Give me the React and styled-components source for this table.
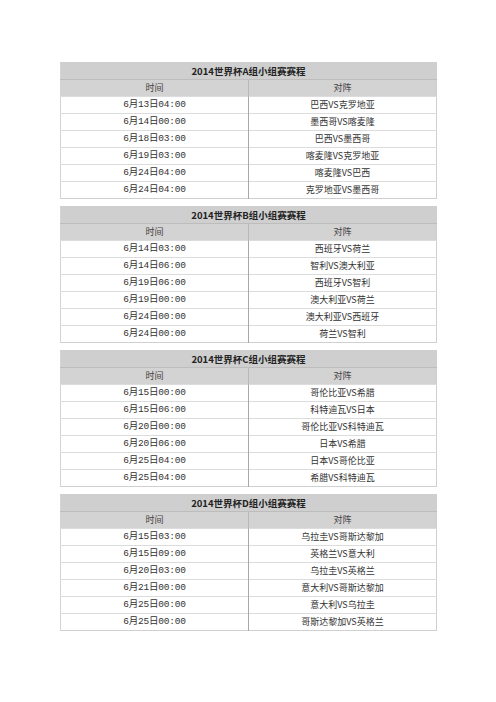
import React from 'react';
import styled, { createGlobalStyle } from 'styled-components';

const GlobalStyle = createGlobalStyle`
    body {
        margin: 0;
        background: #fff;
        font-family: "Noto Sans CJK SC", "DejaVu Sans", sans-serif;
    }
`;

const Page = styled.div`
    width: 496px;
    height: 702px;
    padding: 62px 0 0 60px;
    box-sizing: border-box;
    display: flex;
    flex-direction: column;
    gap: 7px;
`;

const Table = styled.table`
    width: 377px;
    border-collapse: collapse;
    table-layout: fixed;
    font-size: 9px;
    color: #333;
    border-left: 1px solid #d4d4d4;
    border-right: 1px solid #cfcfcf;
    border-bottom: 1px solid #d0d0d0;
`;

const Title = styled.th`
    height: 17px;
    padding: 0;
    background: #cfcfcf;
    font-weight: bold;
    font-size: 9.5px;
    color: #222;
    text-align: center;
    border-bottom: 1px solid #bdbdbd;
    line-height: 16px;
`;

const Head = styled.td`
    height: 16px;
    padding: 0;
    background: #d3d3d3;
    text-align: center;
    line-height: 16px;
    color: #444;
    border-left: ${p => (p.$divide ? '1px solid #b8b8b8' : 'none')};
`;

const Cell = styled.td`
    height: 16px;
    padding: 0;
    text-align: center;
    line-height: 16px;
    border-top: 1px solid #dcdcdc;
    border-left: ${p => (p.$divide ? '1px solid #a8a8a8' : 'none')};
    font-family: ${p => (p.$mono ? '"Liberation Mono", "Noto Sans CJK SC", monospace' : 'inherit')};
    font-size: ${p => (p.$mono ? '9.5px' : '9px')};
    letter-spacing: ${p => (p.$mono ? '-0.2px' : '0')};
`;

const groups = [
    {
        name: 'A',
        games: [
            ['6月13日04:00', '巴西VS克罗地亚'],
            ['6月14日00:00', '墨西哥VS喀麦隆'],
            ['6月18日03:00', '巴西VS墨西哥'],
            ['6月19日03:00', '喀麦隆VS克罗地亚'],
            ['6月24日04:00', '喀麦隆VS巴西'],
            ['6月24日04:00', '克罗地亚VS墨西哥'],
        ],
    },
    {
        name: 'B',
        games: [
            ['6月14日03:00', '西班牙VS荷兰'],
            ['6月14日06:00', '智利VS澳大利亚'],
            ['6月19日06:00', '西班牙VS智利'],
            ['6月19日00:00', '澳大利亚VS荷兰'],
            ['6月24日00:00', '澳大利亚VS西班牙'],
            ['6月24日00:00', '荷兰VS智利'],
        ],
    },
    {
        name: 'C',
        games: [
            ['6月15日00:00', '哥伦比亚VS希腊'],
            ['6月15日06:00', '科特迪瓦VS日本'],
            ['6月20日00:00', '哥伦比亚VS科特迪瓦'],
            ['6月20日06:00', '日本VS希腊'],
            ['6月25日04:00', '日本VS哥伦比亚'],
            ['6月25日04:00', '希腊VS科特迪瓦'],
        ],
    },
    {
        name: 'D',
        games: [
            ['6月15日03:00', '乌拉圭VS哥斯达黎加'],
            ['6月15日09:00', '英格兰VS意大利'],
            ['6月20日03:00', '乌拉圭VS英格兰'],
            ['6月21日00:00', '意大利VS哥斯达黎加'],
            ['6月25日00:00', '意大利VS乌拉圭'],
            ['6月25日00:00', '哥斯达黎加VS英格兰'],
        ],
    },
];

const Schedule = ({ group }) => (
    <Table>
        <thead>
            <tr>
                <Title colSpan={2}>2014世界杯{group.name}组小组赛赛程</Title>
            </tr>
        </thead>
        <tbody>
            <tr>
                <Head>时间</Head>
                <Head $divide>对阵</Head>
            </tr>
            {group.games.map((g, i) => (
                <tr key={i}>
                    <Cell $mono>{g[0]}</Cell>
                    <Cell $divide>{g[1]}</Cell>
                </tr>
            ))}
        </tbody>
    </Table>
);

const App = () => (
    <>
        <GlobalStyle />
        <Page>
            {groups.map(g => <Schedule key={g.name} group={g} />)}
        </Page>
    </>
);

export default App;
